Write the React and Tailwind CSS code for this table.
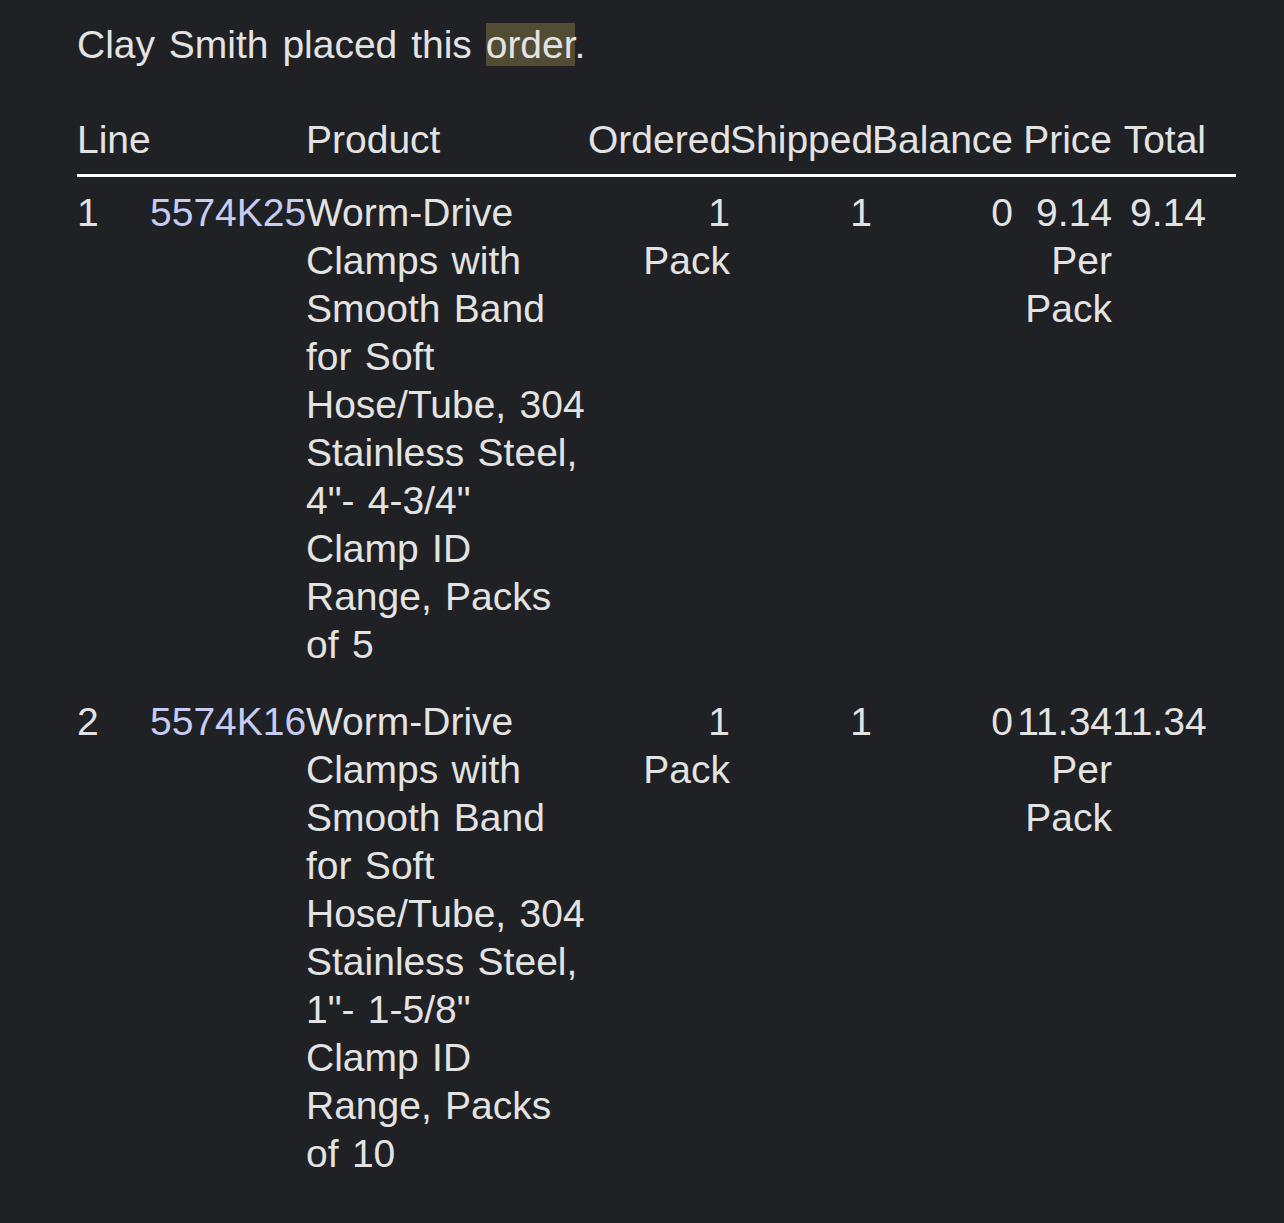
import React from "react";

const rows = [
  {
    line: "1",
    part: "5574K25",
    desc: 'Worm-Drive Clamps with Smooth Band for Soft Hose/Tube, 304 Stainless Steel, 4"- 4-3/4" Clamp ID Range, Packs of 5',
    ordered: "1",
    shipped: "1",
    balance: "0",
    price: "9.14",
    total: "9.14",
  },
  {
    line: "2",
    part: "5574K16",
    desc: 'Worm-Drive Clamps with Smooth Band for Soft Hose/Tube, 304 Stainless Steel, 1"- 1-5/8" Clamp ID Range, Packs of 10',
    ordered: "1",
    shipped: "1",
    balance: "0",
    price: "11.34",
    total: "11.34",
  },
];

export default function App() {
  return (
    <div
      className="min-h-[1223px] bg-[#202124] text-[#e3e3e3] pl-[77px] pr-[48px] pt-[21px] pb-[28px] text-[39px] leading-[48px]"
      style={{ fontFamily: '"Liberation Sans", Arial, sans-serif' }}
    >
      <p className="mb-[47px] [word-spacing:3px]">
        Clay Smith placed this{" "}
        <span className="bg-[#534c35]">order</span>.
      </p>
      <table className="table-fixed w-[1159px] border-collapse [word-spacing:2.5px]">
        <colgroup>
          <col className="w-[73px]" />
          <col className="w-[156px]" />
          <col className="w-[282px]" />
          <col className="w-[142px]" />
          <col className="w-[142px]" />
          <col className="w-[141px]" />
          <col className="w-[99px]" />
          <col className="w-[94px]" />
          <col className="w-[30px]" />
        </colgroup>
        <thead>
          <tr className="border-b-[3px] border-white">
            <th colSpan={2} className="p-0 pb-[10px] text-left font-normal whitespace-nowrap">
              Line
            </th>
            <th className="p-0 pb-[10px] text-left font-normal whitespace-nowrap">Product</th>
            <th className="p-0 pb-[10px] text-right font-normal whitespace-nowrap">Ordered</th>
            <th className="p-0 pb-[10px] text-right font-normal whitespace-nowrap">Shipped</th>
            <th className="p-0 pb-[10px] text-right font-normal whitespace-nowrap">Balance</th>
            <th className="p-0 pb-[10px] text-right font-normal whitespace-nowrap">Price</th>
            <th className="p-0 pb-[10px] text-right font-normal whitespace-nowrap">Total</th>
            <th className="p-0 pb-[10px]"></th>
          </tr>
        </thead>
        <tbody>
          {rows.map((r) => (
            <tr key={r.line} className="align-top">
              <td className="p-0 pt-[12px] pb-[17px] text-left">{r.line}</td>
              <td className="p-0 pt-[12px] pb-[17px] text-left whitespace-nowrap text-[#c6ccf4]">
                {r.part}
              </td>
              <td className="p-0 pt-[12px] pb-[17px] text-left">{r.desc}</td>
              <td className="p-0 pt-[12px] pb-[17px] text-right">
                {r.ordered}
                <br />
                Pack
              </td>
              <td className="p-0 pt-[12px] pb-[17px] text-right">{r.shipped}</td>
              <td className="p-0 pt-[12px] pb-[17px] text-right">{r.balance}</td>
              <td className="p-0 pt-[12px] pb-[17px] text-right whitespace-nowrap">
                {r.price}
                <br />
                Per
                <br />
                Pack
              </td>
              <td className="p-0 pt-[12px] pb-[17px] text-right whitespace-nowrap">{r.total}</td>
              <td className="p-0 pt-[12px] pb-[17px]"></td>
            </tr>
          ))}
        </tbody>
      </table>
    </div>
  );
}
